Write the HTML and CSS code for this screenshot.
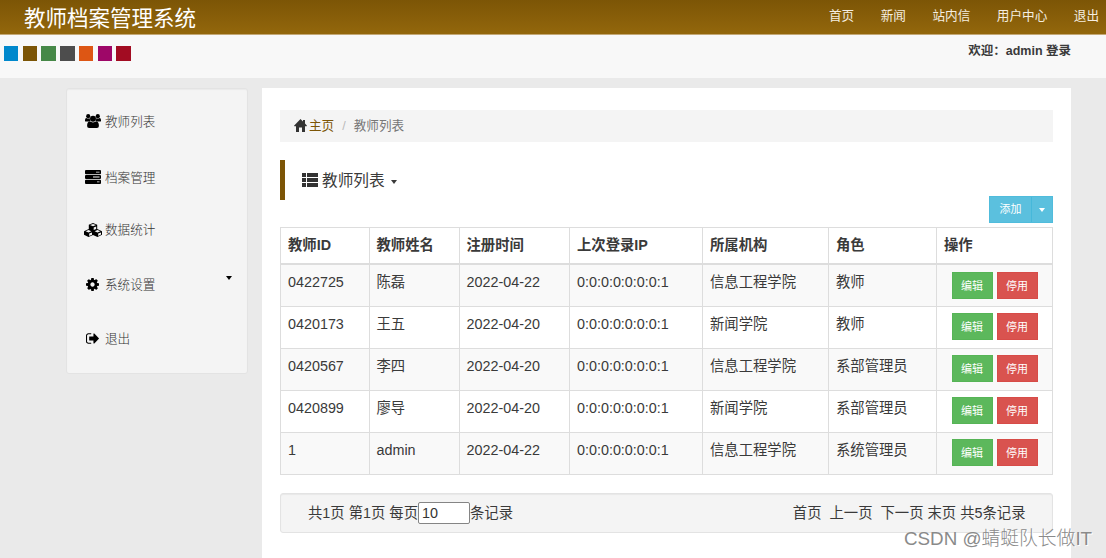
FILE: index.html
```html
<!DOCTYPE html>
<html lang="zh-CN">
<head>
<meta charset="utf-8">
<title>教师档案管理系统</title>
<link rel="stylesheet" href="styles.css">
</head>
<body>
<header class="navbar">
  <div class="brand">教师档案管理系统</div>
  <nav class="topnav"><a>首页</a><a>新闻</a><a>站内信</a><a>用户中心</a><a>退出</a></nav>
</header>
<div class="subbar">
  <div class="themes"><i class="blue"></i><i class="brown"></i><i class="green"></i><i class="gray"></i><i class="orange"></i><i class="purple"></i><i class="red"></i></div>
  <div class="welcome">欢迎：admin 登录</div>
</div>
<div class="layout">
  <aside class="sidebar">
    <a class="item"><svg class="ico" viewBox="0 0 16 14"><circle cx="3.200" cy="2.200" r="2.100"/><circle cx="12.800" cy="2.200" r="2.100"/><path d="M0 7V6q0-2 1.500-2 1.500 1 3.400.2Q4.600 6 5.500 7 4 7 3.600 7.600H1Q0 7.600 0 7zM16 7V6q0-2-1.500-2-1.500 1-3.400.2Q11.400 6 10.500 7q1.500 0 1.900.6H15q1 0 1-.6z"/><circle cx="8" cy="4.700" r="3"/><path d="M4.600 7.300q3.400 2.200 6.800 0 2.500.5 2.500 4.700 0 2-2 2H4.100q-2 0-2-2 0-4.200 2.500-4.700z"/></svg><span>教师列表</span></a>
    <a class="item archive"><svg class="ico" viewBox="0 0 16 14"><path fill-rule="evenodd" d="M1 0h14q1 0 1 1v2.200q0 1-1 1H1q-1 0-1-1V1q0-1 1-1zm10 1.700v.7h3.500v-.7zM1 4.900h14q1 0 1 1v2.200q0 1-1 1H1q-1 0-1-1V5.900q0-1 1-1zm7 1.700v.8h6.500v-.8zM1 9.800h14q1 0 1 1V13q0 1-1 1H1q-1 0-1-1v-2.200q0-1 1-1zm11 1.700v.7h2.500v-.7z"/></svg><span>档案管理</span></a>
    <a class="item"><svg class="ico wide" viewBox="0 0 18 14"><path d="M9 0l4.200 1.700v4.300l4.300 1.900q.5.300.5.800v3.100L13.500 14 9 12.100 4.500 14 0 11.800V8.700q0-.5.500-.8L4.800 6V1.700z"/><path class="cut" d="M9 .9l3 1.200-3 1.200-3-1.200zM9.700 4.500L12.200 3.400v2.500L9.700 7zM4.500 7l2.900 1.200-2.900 1.300-2.900-1.300zM5.200 10.600L8 9.400v2.300l-2.800 1.200zM13.500 7l2.900 1.200-2.900 1.300-2.900-1.300zM14.200 10.600L17 9.400v2.200l-2.800 1.300z"/></svg><span>数据统计</span></a>
    <a class="item"><svg class="ico cog" viewBox="0 128 1536 1536"><path d="M1024 896q0-106-75-181t-181-75-181 75-75 181 75 181 181 75 181-75 75-181zm512-109v222q0 12-8 23t-20 13l-185 28q-19 54-39 91 35 50 107 138 10 12 10 25t-9 23q-27 37-99 108t-94 71q-12 0-26-9l-138-108q-44 23-91 38-16 136-29 186-7 28-36 28h-222q-14 0-24.500-8.500t-11.500-21.500l-28-184q-49-16-90-37l-141 107q-10 9-25 9-14 0-25-11-126-114-165-168-7-10-7-23 0-12 8-23 15-21 51-66.500t54-70.500q-27-50-41-99l-183-27q-13-2-21-12.500t-8-23.500v-222q0-12 8-23t19-13l186-28q14-46 39-92-40-57-107-138-10-12-10-24 0-10 9-23 26-36 98.500-107.500t94.500-71.500q13 0 26 10l138 107q44-23 91-38 16-136 29-186 7-28 36-28h222q14 0 24.500 8.500t11.500 21.500l28 184q49 16 90 37l142-107q9-9 24-9 13 0 25 10 129 119 165 170 7 8 7 22 0 12-8 23-15 21-51 66.500t-54 70.500q26 50 41 98l183 28q13 2 21 12.500t8 23.500z"/></svg><span>系统设置</span><b class="caret side"></b></a>
    <a class="item"><svg class="ico exit" viewBox="64 256 1568 1280"><path d="M704 1440q0 96-32 96H352q-119 0-203.500-84.500T64 1248V544q0-119 84.500-203.500T352 256h320q32 0 32 32 0 96-32 96H352q-66 0-113 47t-47 113v704q0 66 47 113t113 47h312q40 0 40 32zm928-544q0 26-19 45l-544 544q-19 19-45 19t-45-19-19-45v-288H512q-26 0-45-19t-19-45V704q0-26 19-45t45-19h448V352q0-26 19-45t45-19 45 19l544 544q19 19 19 45z"/></svg><span>退出</span></a>
  </aside>
  <main class="main">
    <div class="crumbs"><svg class="home" viewBox="0 0 13 13"><path d="M6.500 0L9 2.500V1h2v3.500l2 2.200-.4.500H11V13H8V8.500H5V13H2V7.200H.4L0 6.700z"/></svg><a>主页</a><i>/</i><span>教师列表</span></div>
    <h1 class="heading"><svg class="list" viewBox="0 0 16 14"><path d="M0 0h4v4H0zM5 0h11v4H5zM0 5h4v4H0zM5 5h11v4H5zM0 10h4v4H0zM5 10h11v4H5z"/></svg><span>教师列表</span><b class="caret"></b></h1>
    <div class="tools"><div class="add"><span>添加</span><em><b class="caret"></b></em></div></div>
    <table class="grid">
      <colgroup><col class="c1"><col class="c2"><col class="c3"><col class="c4"><col class="c5"><col class="c6"><col class="c7"></colgroup>
      <thead><tr><th>教师ID</th><th>教师姓名</th><th>注册时间</th><th>上次登录IP</th><th>所属机构</th><th>角色</th><th>操作</th></tr></thead>
      <tbody>
        <tr><td>0422725</td><td>陈磊</td><td>2022-04-22</td><td>0:0:0:0:0:0:0:1</td><td>信息工程学院</td><td>教师</td><td><div class="ops"><span class="edit">编辑</span><span class="stop">停用</span></div></td></tr>
        <tr><td>0420173</td><td>王五</td><td>2022-04-20</td><td>0:0:0:0:0:0:0:1</td><td>新闻学院</td><td>教师</td><td><div class="ops"><span class="edit">编辑</span><span class="stop">停用</span></div></td></tr>
        <tr><td>0420567</td><td>李四</td><td>2022-04-20</td><td>0:0:0:0:0:0:0:1</td><td>信息工程学院</td><td>系部管理员</td><td><div class="ops"><span class="edit">编辑</span><span class="stop">停用</span></div></td></tr>
        <tr><td>0420899</td><td>廖导</td><td>2022-04-20</td><td>0:0:0:0:0:0:0:1</td><td>新闻学院</td><td>系部管理员</td><td><div class="ops"><span class="edit">编辑</span><span class="stop">停用</span></div></td></tr>
        <tr><td>1</td><td>admin</td><td>2022-04-22</td><td>0:0:0:0:0:0:0:1</td><td>信息工程学院</td><td>系统管理员</td><td><div class="ops"><span class="edit">编辑</span><span class="stop">停用</span></div></td></tr>
      </tbody>
    </table>
    <div class="pager">
      <div class="count">共1页 第1页 每页<input class="size" value="10">条记录</div>
      <div class="pages">首页&nbsp; 上一页&nbsp; 下一页 末页 共5条记录</div>
    </div>
  </main>
</div>
<div class="watermark">CSDN @蜻蜓队长做IT</div>
</body>
</html>
```

FILE: styles.css
```css
* { box-sizing: border-box; }
body {
  margin: 0;
  height: 558px;
  overflow: hidden;
  position: relative;
  background: #eaeaea;
  color: #3a3a3a;
  font: 14.35px/20px "Liberation Sans", "Noto Sans CJK SC", sans-serif;
}
i, em { font-style: normal; }
.navbar {
  display: flex;
  justify-content: space-between;
  height: 35px;
  padding: 0 7px 0 24px;
  background: linear-gradient(#7c5506, #93670c);
  border-bottom: 1px solid #c3a876;
  color: #fff;
}
.brand { font-size: 21.5px; line-height: 39px; }
.topnav { display: flex; gap: 26.6px; font-size: 12.6px; line-height: 32px; color: #f5eee0; }
.subbar {
  display: flex;
  justify-content: space-between;
  height: 43px;
  padding: 0 35px 0 4px;
  background: #f8f8f8;
}
.themes { display: flex; gap: 4.300px; padding-top: 11px; }
.themes i { width: 14.450px; height: 15px; }
.blue { background: #0088cc; }
.brown { background: #7c5506; }
.green { background: #468847; }
.gray { background: #4d4d4d; }
.orange { background: #dd5614; }
.purple { background: #9e0768; }
.red { background: #a20c22; }
.welcome { font-size: 12.5px; font-weight: bold; line-height: 33px; }
.layout { display: flex; gap: 14px; padding: 10px 35px 0 66px; align-items: flex-start; }
.sidebar {
  width: 182px;
  height: 286px;
  padding: 6px 15px 0 16px;
  background: #f4f4f4;
  border: 1px solid #e3e3e3;
  border-radius: 3px;
  box-shadow: inset 0 1px 1px rgba(0, 0, 0, .04);
}
.item {
  display: flex;
  align-items: center;
  height: 54.200px;
  font-size: 12.600px;
  color: #333;
}
.item span { font-weight: 300; }
.archive { padding-top: 4px; }
.ico { width: 16px; height: 14px; margin: -2px 4px 0 2px; fill: #000; }
.wide { width: 18px; margin: 0 3px 0 1px; }
.cut { fill: #f4f4f4; }
.cog { width: 13px; height: 13px; margin: 0 6px 0 3px; }
.exit { width: 13px; height: 11px; margin: -1px 6px 0 3px; }
.caret { border: 3.500px solid transparent; border-top: 4px solid currentColor; border-bottom: 0; }
.side { margin: 0 0 13px auto; color: #000; }
.main { width: 809px; height: 470px; padding: 22px 18px 0; background: #fff; }
.crumbs {
  display: flex;
  align-items: center;
  height: 32px;
  padding-left: 14px;
  background: #f4f4f4;
  font-size: 12.600px;
  color: #777;
}
.home { width: 13px; height: 13px; margin: -2px 2px 0 0; fill: #333; }
.crumbs a { color: #7c5506; }
.crumbs i { margin: 0 8px; color: #bbb; }
.heading {
  display: flex;
  align-items: center;
  height: 40px;
  margin: 18px 0 0;
  padding-left: 17px;
  border-left: 5px solid #7c5506;
  font-size: 15.700px;
  font-weight: normal;
}
.heading span { padding-top: 2px; }
.list { width: 16px; height: 14px; margin: -1px 4px 0 0; fill: #333; }
.heading .caret { margin: 3px 0 0 6px; }
.tools { display: flex; justify-content: flex-end; height: 27px; margin: -4px 0 4px; }
.add {
  display: flex;
  width: 64px;
  background: #5bc0de;
  border: 1px solid #50bcdc;
  color: #fff;
  font-size: 11px;
  line-height: 25px;
}
.add span { width: 41px; text-align: center; }
.add em { display: flex; flex: 1; align-items: center; justify-content: center; border-left: 1px solid #46b8da; }
.grid { width: 773px; table-layout: fixed; border-collapse: collapse; }
.grid th, .grid td { padding: 7px 7px 0; border: 1px solid #ddd; text-align: left; vertical-align: top; }
.grid thead tr { height: 36.500px; }
.grid th { border-bottom-width: 2px; }
.grid tbody tr { height: 42px; }
.grid tbody tr:nth-child(odd) { background: #f9f9f9; }
.c1 { width: 88.500px; }
.c2 { width: 90px; }
.c3 { width: 110.500px; }
.c4 { width: 133px; }
.c5 { width: 126px; }
.c6 { width: 108px; }
.c7 { width: 116px; }
.ops { display: flex; gap: 4px; margin: -0.500px 0 0 7.500px; }
.ops span { width: 41px; height: 27px; border: 1px solid; color: #fff; font-size: 11px; line-height: 26px; text-align: center; }
.ops .edit { background: #5cb85c; border-color: #56b456; }
.ops .stop { background: #d9534f; border-color: #d74c48; }
.pager {
  display: flex;
  justify-content: space-between;
  align-items: center;
  height: 40px;
  margin-top: 18px;
  padding: 0 26.500px 0 27px;
  background: #f4f4f4;
  border: 1px solid #e3e3e3;
  border-radius: 3px;
  box-shadow: inset 0 1px 1px rgba(0, 0, 0, .05);
}
.count { display: flex; align-items: center; white-space: pre; }
.size { width: 52px; height: 22px; padding: 0 3px; border: 1px solid #858585; border-radius: 2px; font: inherit; color: #333; background: #fff; }
.watermark {
  position: absolute;
  left: 904px;
  top: 525px;
  font-size: 18.800px;
  line-height: 28px;
  font-weight: 300;
  color: #8a8a8a;
  text-shadow: 1px 1px 0 #fff;
  white-space: nowrap;
}
```
